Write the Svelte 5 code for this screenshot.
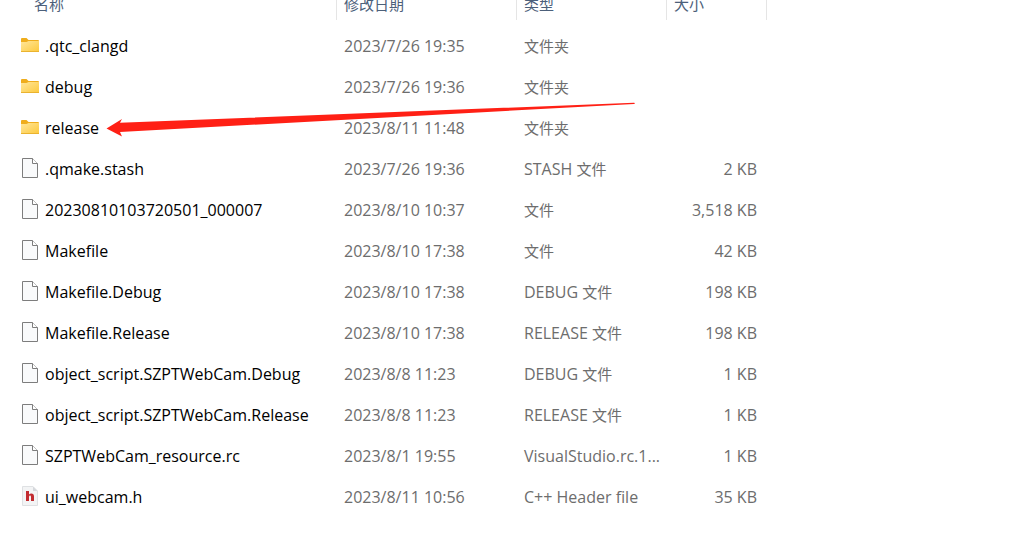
<script>
  const files = [
    { icon: 'folder', name: '.qtc_clangd', date: '2023/7/26 19:35', kind: '', label: '文件夹', size: '' },
    { icon: 'folder', name: 'debug', date: '2023/7/26 19:36', kind: '', label: '文件夹', size: '' },
    { icon: 'folder', name: 'release', date: '2023/8/11 11:48', kind: '', label: '文件夹', size: '' },
    { icon: 'file', name: '.qmake.stash', date: '2023/7/26 19:36', kind: 'STASH ', label: '文件', size: '2 KB' },
    { icon: 'file', name: '20230810103720501_000007', date: '2023/8/10 10:37', kind: '', label: '文件', size: '3,518 KB' },
    { icon: 'file', name: 'Makefile', date: '2023/8/10 17:38', kind: '', label: '文件', size: '42 KB' },
    { icon: 'file', name: 'Makefile.Debug', date: '2023/8/10 17:38', kind: 'DEBUG ', label: '文件', size: '198 KB' },
    { icon: 'file', name: 'Makefile.Release', date: '2023/8/10 17:38', kind: 'RELEASE ', label: '文件', size: '198 KB' },
    { icon: 'file', name: 'object_script.SZPTWebCam.Debug', date: '2023/8/8 11:23', kind: 'DEBUG ', label: '文件', size: '1 KB' },
    { icon: 'file', name: 'object_script.SZPTWebCam.Release', date: '2023/8/8 11:23', kind: 'RELEASE ', label: '文件', size: '1 KB' },
    { icon: 'file', name: 'SZPTWebCam_resource.rc', date: '2023/8/1 19:55', kind: 'VisualStudio.rc.1...', label: '', size: '1 KB' },
    { icon: 'header', name: 'ui_webcam.h', date: '2023/8/11 10:56', kind: 'C++ Header file', label: '', size: '35 KB' }
  ];
</script>

<main class="explorer">
  <table>
    <colgroup>
      <col class="col-name" />
      <col class="col-date" />
      <col class="col-type" />
      <col class="col-size" />
    </colgroup>
    <thead>
      <tr>
        <th scope="col" class="first">名称</th>
        <th scope="col">修改日期</th>
        <th scope="col">类型</th>
        <th scope="col">大小</th>
      </tr>
    </thead>
    <tbody>
      {#each files as file}
        <tr>
          <td class="name">
            <div class="entry">
              {#if file.icon === 'folder'}
                <svg class="icon" width="20" height="20" viewBox="0 -1 20 20" aria-hidden="true">
                  <defs>
                    <linearGradient id="folder-face" x1="0" y1="0" x2="1" y2="1">
                      <stop offset="0" stop-color="#ffe69a" />
                      <stop offset="1" stop-color="#fdc93c" />
                    </linearGradient>
                  </defs>
                  <path d="M1 3Q1 2 2 2H6.5L8.5 4H18Q19 4 19 5V9H1Z" fill="#efad1c" />
                  <path d="M1 6H6.5L8.5 5H19V15Q19 16 18 16H2Q1 16 1 15Z" fill="url(#folder-face)" />
                  <path d="M1 15.5H19" stroke="#eab32f" />
                </svg>
              {:else if file.icon === 'file'}
                <svg class="icon" width="20" height="20" viewBox="0 0 20 20" aria-hidden="true">
                  <path d="M2.5 0.5H12.5L17.5 5.5V19.5H2.5Z" fill="#f9fafb" stroke="#7d7d7d" />
                  <path d="M12.5 0.5V5.5H17.5" fill="#fff" stroke="#7d7d7d" />
                </svg>
              {:else}
                <svg class="icon" width="20" height="20" viewBox="0 0 20 20" aria-hidden="true">
                  <path d="M2.5 0.5H13L17.5 5V19.5H2.5Z" fill="#f3f4f5" stroke="#dfe1e3" />
                  <path d="M13 0.5V5H17.5Z" fill="#d5d8dc" />
                  <path d="M6 5H9V8.5Q10 7.5 11.3 7.5Q14 7.5 14 10.5V15H11V11Q11 9.6 10.1 9.6Q9 9.6 9 11V15H6Z" fill="#c22b30" />
                </svg>
              {/if}
              <span>{file.name}</span>
            </div>
          </td>
          <td>{file.date}</td>
          <td>{file.kind}<span class="cjk">{file.label}</span></td>
          <td class="size">{file.size}</td>
        </tr>
      {/each}
    </tbody>
  </table>

  <svg class="arrow" width="530" height="40" viewBox="0 0 530 40" aria-hidden="true">
    <path d="M0.5 28.5L16 19L14 22.7L528 2.8Q530 3.3 528 4L14 32L16 36.5Z" fill="#ff2015" />
  </svg>
</main>

<style>
  :global(body) {
    margin: 0;
    background: #fff;
  }

  .explorer {
    position: relative;
    overflow: hidden;
    font-family: 'Open Sans', 'Noto Sans CJK SC', sans-serif;
    font-size: 16px;
    color: #6d6d6d;
  }

  table {
    width: 767px;
    table-layout: fixed;
    border-collapse: separate;
    border-spacing: 0;
  }

  .col-name { width: 337px; }
  .col-date { width: 180px; }
  .col-type { width: 150px; }
  .col-size { width: 100px; }

  th {
    padding: 0 0 12px 7px;
    border-right: 1px solid #e5e5e5;
    font-size: 15px;
    font-weight: 400;
    line-height: 8px;
    text-align: left;
    color: #4c607a;
  }

  th.first {
    padding-left: 34px;
  }

  td {
    height: 41px;
    padding: 0 0 0 7px;
    line-height: 20px;
    white-space: nowrap;
  }

  tbody::before {
    content: '';
    display: block;
    height: 5px;
  }

  td.name {
    padding-left: 20px;
    color: #000;
  }

  td.size {
    padding: 0 10px 0 0;
    text-align: right;
  }

  .cjk {
    font-size: 15px;
  }

  .entry {
    display: flex;
    align-items: center;
    gap: 5px;
  }

  .icon {
    flex: none;
    margin-bottom: 2px;
  }

  .arrow {
    position: absolute;
    left: 106px;
    top: 100px;
    pointer-events: none;
  }
</style>
